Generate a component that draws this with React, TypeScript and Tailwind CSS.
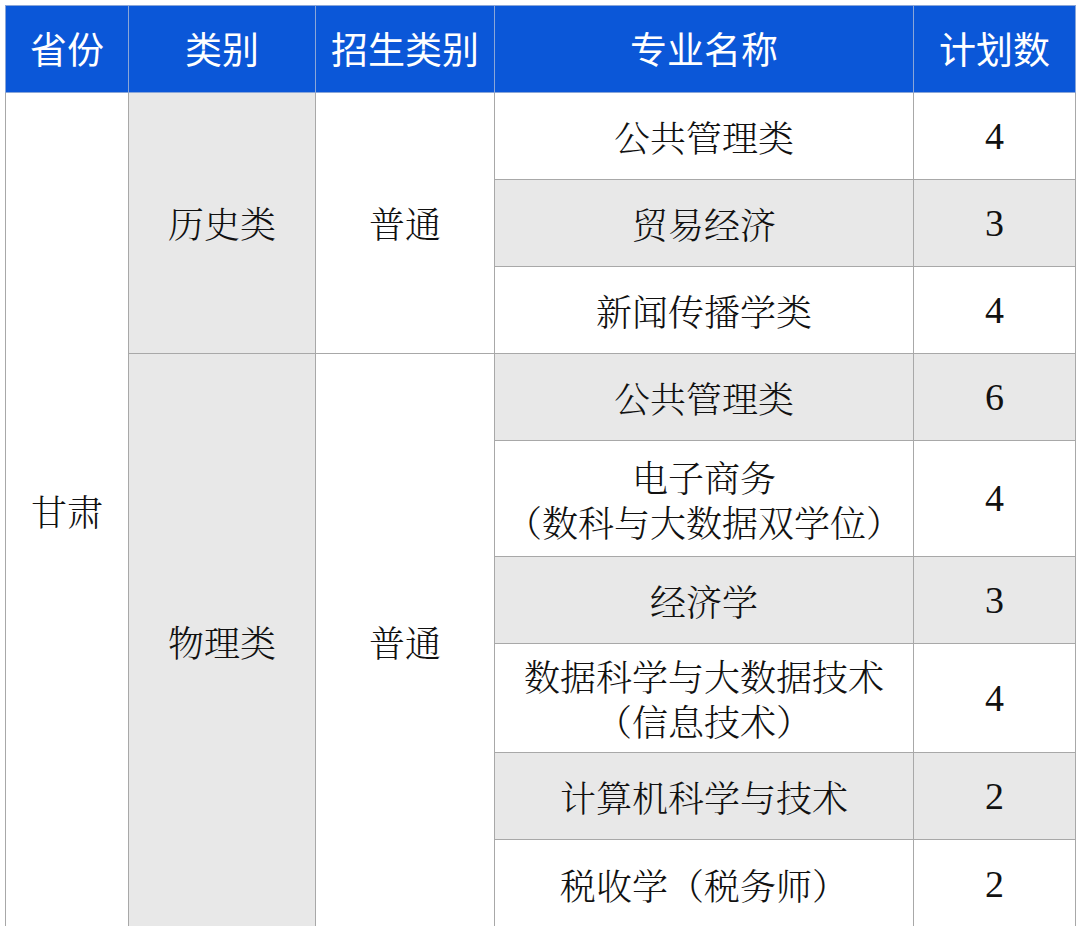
const body = { fontFamily: '"Noto Serif CJK SC", "Noto Sans CJK SC", serif' };
const digits = { fontFamily: '"Liberation Serif", "Times New Roman", Tinos, serif' };

type Major = { name: string[]; count: number; h: number };

const history: Major[] = [
  { name: ['公共管理类'], count: 4, h: 87 },
  { name: ['贸易经济'], count: 3, h: 87 },
  { name: ['新闻传播学类'], count: 4, h: 87 },
];

const physics: Major[] = [
  { name: ['公共管理类'], count: 6, h: 87 },
  { name: ['电子商务', '（数科与大数据双学位）'], count: 4, h: 116 },
  { name: ['经济学'], count: 3, h: 87 },
  { name: ['数据科学与大数据技术', '（信息技术）'], count: 4, h: 109 },
  { name: ['计算机科学与技术'], count: 2, h: 87 },
  { name: ['税收学（税务师）'], count: 2, h: 90 },
];

const cell = 'border border-[#a8a8a8] text-center align-middle p-0';

function MajorCells({ m, gray }: { m: Major; gray: boolean }) {
  const bg = gray ? 'bg-[#e8e8e8]' : 'bg-white';
  return (
    <>
      <td className={`${cell} ${bg} text-[36px] font-light`} style={body}>
        <div className="flex flex-col items-center gap-[2px]">
          {m.name.map((l) => (
            <span key={l} className="leading-[43px]">
              {l}
            </span>
          ))}
        </div>
      </td>
      <td className={`${cell} ${bg}`}>
        <span className="text-[38px] font-normal" style={digits}>
          {m.count}
        </span>
      </td>
    </>
  );
}

export default function App() {
  let idx = 0;
  return (
    <div className="w-[1080px] h-[930px] bg-white pt-[5px] pl-[5px]">
      <div className="h-[921px] overflow-hidden">
        <table className="border-collapse table-fixed w-[1070px] text-[#111]">
          <colgroup>
            <col className="w-[123px]" />
            <col className="w-[187px]" />
            <col className="w-[179px]" />
            <col className="w-[419px]" />
            <col className="w-[162px]" />
          </colgroup>
          <thead>
            <tr className="h-[87px] bg-[#0b57d8] text-white text-[37px] font-['Noto_Sans_CJK_SC',sans-serif]">
              <th className="border border-[#8aa6d8] font-normal">省份</th>
              <th className="border border-[#8aa6d8] font-normal">类别</th>
              <th className="border border-[#8aa6d8] font-normal">招生类别</th>
              <th className="border border-[#8aa6d8] font-normal">专业名称</th>
              <th className="border border-[#8aa6d8] font-normal">计划数</th>
            </tr>
          </thead>
          <tbody>
            {history.map((m, i) => {
              const gray = idx++ % 2 === 1;
              return (
                <tr key={'h' + i} style={{ height: m.h }}>
                  {i === 0 && (
                    <>
                      <td rowSpan={9} className={`${cell} bg-white text-[36px] font-light`} style={body}>
                        甘肃
                      </td>
                      <td rowSpan={3} className={`${cell} bg-[#e8e8e8] text-[36px] font-light`} style={body}>
                        历史类
                      </td>
                      <td rowSpan={3} className={`${cell} bg-white text-[36px] font-light`} style={body}>
                        普通
                      </td>
                    </>
                  )}
                  <MajorCells m={m} gray={gray} />
                </tr>
              );
            })}
            {physics.map((m, i) => {
              const gray = idx++ % 2 === 1;
              return (
                <tr key={'p' + i} style={{ height: m.h }}>
                  {i === 0 && (
                    <>
                      <td rowSpan={6} className={`${cell} bg-[#e8e8e8] text-[36px] font-light`} style={body}>
                        物理类
                      </td>
                      <td rowSpan={6} className={`${cell} bg-white text-[36px] font-light`} style={body}>
                        普通
                      </td>
                    </>
                  )}
                  <MajorCells m={m} gray={gray} />
                </tr>
              );
            })}
          </tbody>
        </table>
      </div>
    </div>
  );
}
